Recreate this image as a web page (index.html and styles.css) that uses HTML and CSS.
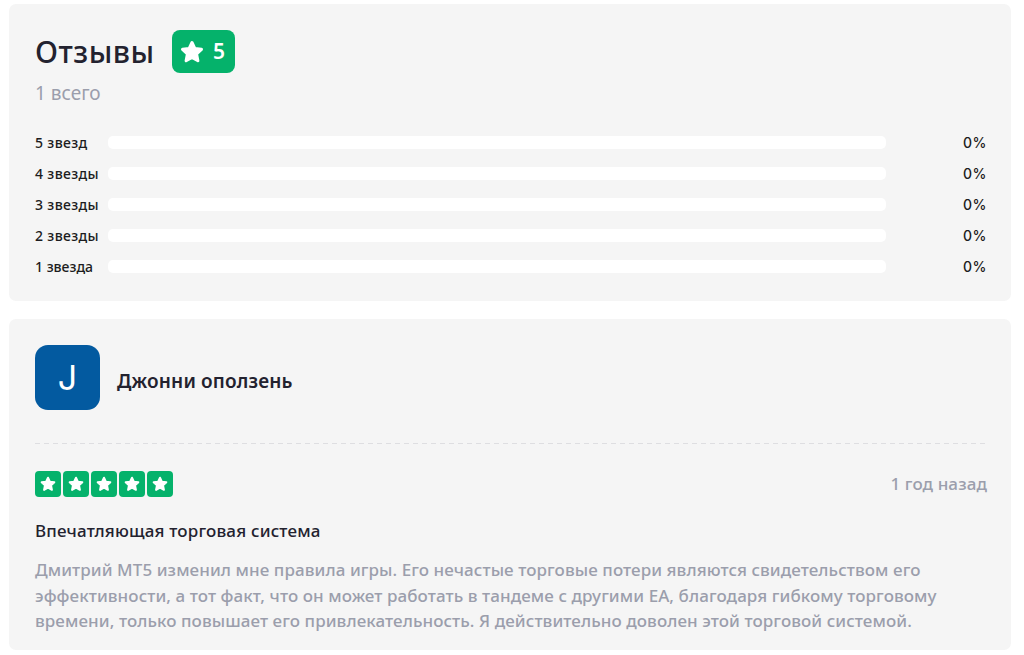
FILE: index.html
```
<!DOCTYPE html>
<html lang="ru">
<head>
    <meta charset="UTF-8">
    <title>Отзывы</title>
    <link rel="stylesheet" href="styles.css">
</head>
<body>
    <svg width="0" height="0" class="sprite">
        <symbol id="star" viewBox="0 0 24 24">
            <path d="M12 2.500l2.800 6 6.700.800-4.900 4.700 1.300 6.800-5.900-3.300-5.900 3.300 1.300-6.800-4.900-4.700 6.700-.800z" fill="#fff" stroke="#fff" stroke-width="3" stroke-linejoin="round"/>
        </symbol>
    </svg>

    <section class="card summary">
        <div class="summary-head">
            <h1>Отзывы</h1>
            <div class="badge"><svg><use href="#star"/></svg><span>5</span></div>
        </div>
        <p class="total">1 всего</p>

        <div class="ratings">
            <div class="row"><span class="label">5 звезд</span><div class="bar"></div><span class="percent">0%</span></div>
            <div class="row"><span class="label">4 звезды</span><div class="bar"></div><span class="percent">0%</span></div>
            <div class="row"><span class="label">3 звезды</span><div class="bar"></div><span class="percent">0%</span></div>
            <div class="row"><span class="label">2 звезды</span><div class="bar"></div><span class="percent">0%</span></div>
            <div class="row"><span class="label one">1 звезда</span><div class="bar"></div><span class="percent">0%</span></div>
        </div>
    </section>

    <article class="card review">
        <header class="author">
            <div class="avatar">J</div>
            <span class="name">Джонни оползень</span>
        </header>
        <svg class="divider"><line x1="0" y1="1.5" x2="952" y2="1.5"/></svg>
        <div class="meta">
            <div class="stars">
                <i><svg><use href="#star"/></svg></i>
                <i><svg><use href="#star"/></svg></i>
                <i><svg><use href="#star"/></svg></i>
                <i><svg><use href="#star"/></svg></i>
                <i><svg><use href="#star"/></svg></i>
            </div>
            <time>1 год назад</time>
        </div>
        <h2>Впечатляющая торговая система</h2>
        <p class="text">
            Дмитрий МТ5 изменил мне правила игры. Его нечастые торговые потери являются свидетельством его<br>
            эффективности, а тот факт, что он может работать в тандеме с другими ЕА, благодаря гибкому торговому<br>
            времени, только повышает его привлекательность. Я действительно доволен этой торговой системой.
        </p>
    </article>
</body>
</html>
```

FILE: styles.css
```
:root {
    --card: #f5f5f5;
    --dark: #23222f;
    --muted: #9b9eac;
    --green: #05b26b;
}

* {
    margin: 0;
    padding: 0;
    box-sizing: border-box;
}

body {
    background: #fff;
    color: var(--dark);
    font-family: 'Noto Sans', 'Open Sans', sans-serif;
    padding: 4px 13px 0 9px;
}

.sprite {
    display: block;
}

.card {
    background: var(--card);
    border-radius: 7px;
    padding: 26px 24px 0 26px;
}

.summary {
    height: 297px;
    margin-bottom: 18px;
}

.summary-head {
    display: flex;
    align-items: center;
    gap: 18px;
    height: 43px;
}

h1 {
    width: 119px;
    font-size: 30px;
    font-weight: 500;
    letter-spacing: 0.5px;
    line-height: 43px;
    white-space: nowrap;
}

.badge {
    display: flex;
    align-items: center;
    gap: 9px;
    width: 63px;
    height: 43px;
    padding-left: 8px;
    border-radius: 8px;
    background: var(--green);
    color: #fff;
    font-size: 21px;
    font-weight: 600;
    line-height: 43px;
}

.badge svg {
    width: 24px;
    height: 24px;
}

.total {
    margin-top: 7px;
    color: var(--muted);
    font-size: 19px;
    line-height: 26px;
}

.ratings {
    margin-top: 22px;
}

.row {
    display: flex;
    align-items: center;
    height: 31px;
    color: #1c1c20;
    font-size: 14px;
    font-weight: 500;
}

.label {
    width: 73px;
    padding-bottom: 2px;
    letter-spacing: 0.350px;
    white-space: nowrap;
}

.label.one {
    letter-spacing: 0;
}

.bar {
    width: 778px;
    height: 13px;
    margin-bottom: 2px;
    border-radius: 5px;
    background: #fff;
}

.percent {
    margin-left: auto;
    padding-bottom: 2px;
    font-family: Inter, sans-serif;
    letter-spacing: 0.5px;
}

.review {
    height: 331px;
}

.author {
    display: flex;
    align-items: center;
    gap: 17px;
}

.avatar {
    width: 65px;
    height: 65px;
    border-radius: 13px;
    background: #035aa0;
    color: #fff;
    font-family: Inter, sans-serif;
    font-size: 34px;
    line-height: 65px;
    text-align: center;
}

.name {
    padding-top: 6px;
    font-size: 19px;
    font-weight: 600;
    letter-spacing: 0.150px;
}

.divider {
    display: block;
    width: 952px;
    height: 2px;
    margin-top: 32px;
}

.divider line {
    stroke: #dedee1;
    stroke-dasharray: 5 4;
}

.meta {
    display: flex;
    align-items: center;
    justify-content: space-between;
    height: 26px;
    margin-top: 27px;
}

.stars {
    display: flex;
    gap: 2px;
}

.stars i {
    display: flex;
    align-items: center;
    justify-content: center;
    width: 26px;
    height: 26px;
    border-radius: 4px;
    background: var(--green);
}

.stars svg {
    width: 16px;
    height: 16px;
}

time {
    padding-bottom: 2px;
    color: var(--muted);
    font-size: 17px;
    font-weight: 500;
    letter-spacing: 0.1px;
}

h2 {
    margin-top: 21px;
    font-size: 17px;
    font-weight: 500;
    letter-spacing: 0.180px;
    line-height: 26px;
}

.text {
    margin-top: 13px;
    color: var(--muted);
    font-size: 17px;
    font-weight: 500;
    letter-spacing: 0.075px;
    line-height: 25.700px;
    white-space: nowrap;
}
```
